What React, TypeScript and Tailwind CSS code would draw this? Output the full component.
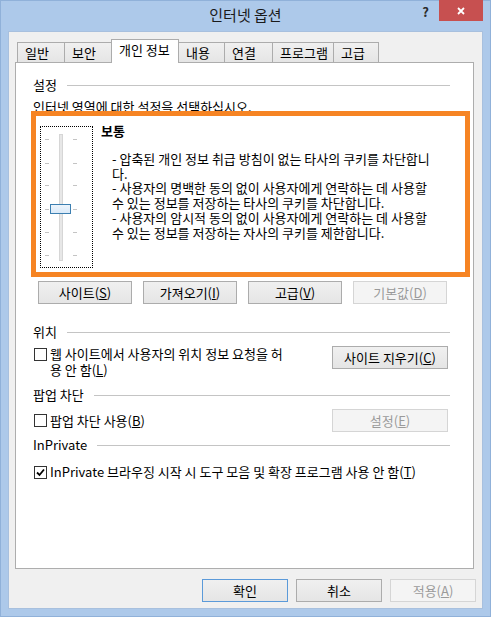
import type { ReactNode } from "react";

const tabs = [
  { label: "일반", w: "w-[48px]" },
  { label: "보안", w: "w-[48px]" },
  { label: "개인 정보", w: "w-[68px]", active: true },
  { label: "내용", w: "w-[47px]" },
  { label: "연결", w: "w-[49px]" },
  { label: "프로그램", w: "w-[62px]" },
  { label: "고급", w: "w-[46px]" }
];

const policy = [
  "- 압축된 개인 정보 취급 방침이 없는 타사의 쿠키를 차단합니",
  "다.",
  "- 사용자의 명백한 동의 없이 사용자에게 연락하는 데 사용할",
  "수 있는 정보를 저장하는 타사의 쿠키를 차단합니다.",
  "- 사용자의 암시적 동의 없이 사용자에게 연락하는 데 사용할",
  "수 있는 정보를 저장하는 자사의 쿠키를 제한합니다."
];

const tickYs = [12, 36, 58, 82, 105, 128];

function Btn({
  children,
  className,
  kind = "normal"
}: {
  children: ReactNode;
  className: string;
  kind?: "normal" | "default" | "disabled";
}) {
  const look =
    kind === "disabled"
      ? "border-[#d5d5d5] bg-[#f4f4f4] text-[#9a9a9a]"
      : kind === "default"
        ? "border-[#5b9ad9] bg-gradient-to-b from-[#f0f0f0] to-[#e5e5e5] text-black"
        : "border-[#acacac] bg-gradient-to-b from-[#f0f0f0] to-[#e5e5e5] text-black";
  return (
    <div className={`flex h-[23px] shrink-0 items-center justify-center border text-[13px] leading-[16px] ${look} ${className}`}>
      {children}
    </div>
  );
}

function GroupHeader({ label, className }: { label: string; className: string }) {
  return (
    <div className={`flex h-[16px] items-center ${className}`}>
      <span className="text-[13px] leading-[16px]">{label}</span>
      <div className="ml-[10px] h-px flex-1 bg-[#c4c4c4]" />
    </div>
  );
}

function Checkbox({ checked = false }: { checked?: boolean }) {
  return (
    <div className="flex h-[13px] w-[13px] shrink-0 items-center justify-center border border-[#333333] bg-white">
      {checked && (
        <svg width="9" height="9" viewBox="0 0 9 9">
          <path d="M1 4.5 L3.5 7 L8 1.5" fill="none" stroke="#000" strokeWidth="1.8" />
        </svg>
      )}
    </div>
  );
}

function Slider() {
  return (
    <div className="ml-[7px] h-[142px] w-[53px] shrink-0 border border-dotted border-black">
      <svg width="51" height="140" viewBox="0 0 51 140">
        <defs>
          <linearGradient id="thumb" x1="0" y1="0" x2="0" y2="1">
            <stop offset="0" stopColor="#eef5fc" />
            <stop offset="1" stopColor="#d9e9f8" />
          </linearGradient>
        </defs>
        <rect x="18.5" y="7.5" width="3" height="126" fill="#e7e7e7" stroke="#d6d6d6" />
        {tickYs.map((y) => (
          <g key={y}>
            <rect x="4" y={y} width="4" height="1" fill="#c4c4c4" />
            <rect x="32" y={y} width="4" height="1" fill="#c4c4c4" />
          </g>
        ))}
        <rect x="9.5" y="77.5" width="20" height="9" fill="url(#thumb)" stroke="#3c7fb1" />
      </svg>
    </div>
  );
}

export default function App() {
  return (
    <div className="flex h-[617px] w-[491px] flex-col border border-[#90b1d9] bg-[#adc9ea] font-['Noto_Sans_CJK_KR',sans-serif] text-black">
      <div className="flex h-[30px] shrink-0">
        <div className="w-[69px]" />
        <div className="flex-1 pt-[4px] text-center text-[15px] leading-[20px] text-[#1a1a1a]">인터넷 옵션</div>
        <div className="flex w-[69px] items-start justify-end pr-[7px]">
          <span className="mr-[10px] mt-[3px] text-[13px] font-bold leading-[16px] text-[#2b2b2b]">?</span>
          <div className="-mt-px flex h-[21px] w-[44px] items-center justify-center bg-[#c75050]">
            <svg width="8" height="8" viewBox="0 0 8 8">
              <path d="M1 1 L7 7 M7 1 L1 7" stroke="#fff" strokeWidth="1.8" />
            </svg>
          </div>
        </div>
      </div>

      <div className="mx-[7px] flex h-[578px] flex-col border border-[#a8c0de] bg-[#f0f0f0]">
        <div className="flex h-[30px] items-end pl-[8px] pt-[7px]">
          {tabs.map((t, i) =>
            t.active ? (
              <div
                key={t.label}
                className={`relative z-10 -mb-px -ml-px flex h-[24px] items-start border border-b-0 border-[#acacac] bg-white pl-[7px] pt-[2px] text-[13px] leading-[16px] ${t.w}`}
              >
                {t.label}
              </div>
            ) : (
              <div
                key={t.label}
                className={`flex h-[20px] items-start border border-b-0 border-[#acacac] bg-gradient-to-b from-[#f0f0f0] to-[#e5e5e5] pl-[7px] pt-[2px] text-[13px] leading-[16px] ${t.w} ${i > 0 ? "-ml-px" : ""}`}
              >
                {t.label}
              </div>
            )
          )}
        </div>

        <div className="relative ml-[6px] flex h-[507px] w-[459px] flex-col border border-[#adadad] bg-white pl-[17px] pr-[23px]">
          <GroupHeader label="설정" className="mt-[14px]" />
          <div className="mt-[6px] text-[13px] leading-[16px]">인터넷 영역에 대한 설정을 선택하십시오.</div>

          <div className="mt-[11px] flex">
            <Slider />
            <div className="-mt-[3px] ml-[8px] flex flex-col text-[13px]">
              <div className="font-bold leading-[16px]">보통</div>
              <div className="mt-[13px] flex flex-col pl-[11px] leading-[14.7px]">
                {policy.map((line) => (
                  <div key={line} className="whitespace-nowrap">
                    {line}
                  </div>
                ))}
              </div>
            </div>
          </div>

          <div className="ml-[5px] mt-[13px] flex gap-[11px]">
            <Btn className="w-[94px]">
              사이트(<u>S</u>)
            </Btn>
            <Btn className="w-[94px]">
              가져오기(<u>I</u>)
            </Btn>
            <Btn className="w-[94px]">
              고급(<u>V</u>)
            </Btn>
            <Btn className="w-[94px]" kind="disabled">
              기본값(<u>D</u>)
            </Btn>
          </div>

          <GroupHeader label="위치" className="mt-[20px]" />
          <div className="mt-[6px] flex items-start">
            <div className="ml-px mt-[2px]">
              <Checkbox />
            </div>
            <div className="ml-[3px] text-[13px] leading-[16px]">
              <div>웹 사이트에서 사용자의 위치 정보 요청을 허</div>
              <div>
                용 안 함(<u>L</u>)
              </div>
            </div>
            <div className="flex-1" />
            <Btn className="mr-[2px] w-[116px]">
              사이트 지우기(<u>C</u>)
            </Btn>
          </div>

          <GroupHeader label="팝업 차단" className="mt-[9px]" />
          <div className="mt-[6px] flex h-[23px] items-center">
            <div className="ml-px">
              <Checkbox />
            </div>
            <div className="ml-[3px] text-[13px] leading-[16px]">
              팝업 차단 사용(<u>B</u>)
            </div>
            <div className="flex-1" />
            <Btn className="mr-[2px] w-[116px]" kind="disabled">
              설정(<u>E</u>)
            </Btn>
          </div>

          <GroupHeader label="InPrivate" className="mt-[5px]" />
          <div className="mt-[11px] flex items-center">
            <div className="ml-px">
              <Checkbox checked />
            </div>
            <div className="ml-[3px] text-[13px] leading-[16px]">
              InPrivate 브라우징 시작 시 도구 모음 및 확장 프로그램 사용 안 함(<u>T</u>)
            </div>
          </div>

          <div className="pointer-events-none absolute left-[15px] top-[48px] h-[166px] w-[439px] border-[5px] border-[#f68423]" />
        </div>

        <div className="mt-[10px] flex justify-end gap-[8px] pr-[6px]">
          <Btn className="w-[86px]" kind="default">
            확인
          </Btn>
          <Btn className="w-[86px]">취소</Btn>
          <Btn className="w-[86px]" kind="disabled">
            적용(<u>A</u>)
          </Btn>
        </div>
      </div>
    </div>
  );
}
